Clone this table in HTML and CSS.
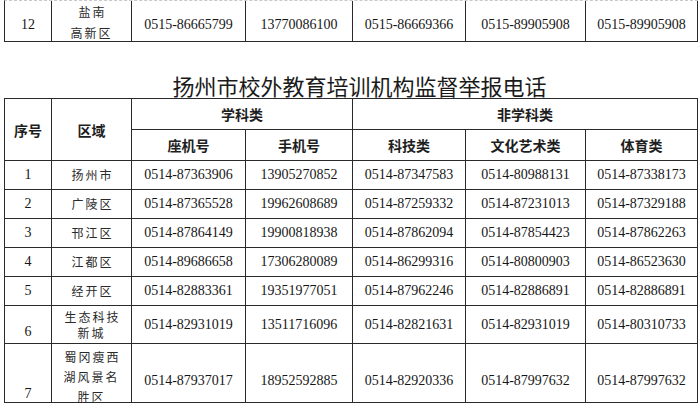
FILE: index.html
```html
<!DOCTYPE html>
<html lang="zh-CN">
<head>
<meta charset="utf-8">
<title>扬州市校外教育培训机构监督举报电话</title>
<link rel="stylesheet" href="styles.css">
</head>
<body>
<div class="page">
  <div class="sheet sheet-top">
    <div class="cell no top-num">12</div>
    <div class="cell area area-top">盐南<br>高新区</div>
    <div class="cell num top-num">0515-86665799</div>
    <div class="cell num top-num">13770086100</div>
    <div class="cell num top-num">0515-86669366</div>
    <div class="cell num top-num">0515-89905908</div>
    <div class="cell num top-num">0515-89905908</div>
  </div>

  <div class="title">扬州市校外教育培训机构监督举报电话</div>

  <div class="sheet sheet-main">
    <div class="cell hd span-r2">序号</div>
    <div class="cell hd span-r2">区域</div>
    <div class="cell hd span-c2">学科类</div>
    <div class="cell hd span-c3">非学科类</div>
    <div class="cell hd">座机号</div>
    <div class="cell hd">手机号</div>
    <div class="cell hd">科技类</div>
    <div class="cell hd">文化艺术类</div>
    <div class="cell hd">体育类</div>

    <div class="cell no">1</div><div class="cell area">扬州市</div>
    <div class="cell num">0514-87363906</div><div class="cell num">13905270852</div>
    <div class="cell num">0514-87347583</div><div class="cell num">0514-80988131</div><div class="cell num">0514-87338173</div>

    <div class="cell no">2</div><div class="cell area">广陵区</div>
    <div class="cell num">0514-87365528</div><div class="cell num">19962608689</div>
    <div class="cell num">0514-87259332</div><div class="cell num">0514-87231013</div><div class="cell num">0514-87329188</div>

    <div class="cell no">3</div><div class="cell area">邗江区</div>
    <div class="cell num">0514-87864149</div><div class="cell num">19900818938</div>
    <div class="cell num">0514-87862094</div><div class="cell num">0514-87854423</div><div class="cell num">0514-87862263</div>

    <div class="cell no">4</div><div class="cell area">江都区</div>
    <div class="cell num">0514-89686658</div><div class="cell num">17306280089</div>
    <div class="cell num">0514-86299316</div><div class="cell num">0514-80800903</div><div class="cell num">0514-86523630</div>

    <div class="cell no">5</div><div class="cell area">经开区</div>
    <div class="cell num">0514-82883361</div><div class="cell num">19351977051</div>
    <div class="cell num">0514-87962246</div><div class="cell num">0514-82886891</div><div class="cell num">0514-82886891</div>

    <div class="cell no no-6">6</div><div class="cell area area-6">生态科技<br>新城</div>
    <div class="cell num">0514-82931019</div><div class="cell num">13511716096</div>
    <div class="cell num">0514-82821631</div><div class="cell num">0514-82931019</div><div class="cell num">0514-80310733</div>

    <div class="cell no no-7">7</div><div class="cell area area-7">蜀冈瘦西<br>湖风景名<br>胜区</div>
    <div class="cell num num-7">0514-87937017</div><div class="cell num num-7">18952592885</div>
    <div class="cell num num-7">0514-82920336</div><div class="cell num num-7">0514-87997632</div><div class="cell num num-7">0514-87997632</div>
  </div>
</div>
</body>
</html>
```

FILE: styles.css
```css
html, body {
  margin: 0;
  padding: 0;
  background: #ffffff;
}

.page {
  width: 700px;
  height: 408px;
  overflow: hidden;
  padding-left: 4px;
  box-sizing: border-box;
  color: #161616;
}

.sheet {
  display: grid;
  grid-template-columns: 47px 80px 114px 107px 113px 120px 112px;
  width: max-content;
  border-left: 1px solid #2a2a2a;
}

.sheet-top {
  grid-template-rows: 41px;
  border-top: 1px dashed #c8c8c8;
}

.sheet-main {
  grid-template-rows: 31px 31px 29px 29px 29px 29px 29px 38px 59px;
  border-top: 1px solid #2a2a2a;
}

.cell {
  box-sizing: border-box;
  border-right: 1px solid #2a2a2a;
  border-bottom: 1px solid #2a2a2a;
  display: flex;
  align-items: center;
  justify-content: center;
  text-align: center;
  overflow: visible;
  white-space: nowrap;
}

.span-r2 { grid-row: span 2; }
.span-c2 { grid-column: span 2; }
.span-c3 { grid-column: span 3; }

.hd {
  font-family: "Noto Sans CJK SC", sans-serif;
  font-weight: 700;
  font-size: 14px;
  line-height: 16px;
  color: #1e1e1e;
}

.num,
.no {
  font-family: "Liberation Serif", "Times New Roman", serif;
  font-size: 14px;
  line-height: 16px;
}

.area {
  font-family: "Noto Sans CJK SC", sans-serif;
  font-weight: 400;
  font-size: 12px;
  letter-spacing: 2px;
  text-indent: 2px;
  line-height: 16px;
  color: #2a2a2a;
}

.top-num {
  padding-top: 7px;
}

.area-top {
  align-items: flex-start;
  line-height: 21px;
}

.title {
  font-family: "Noto Sans CJK SC", sans-serif;
  font-size: 22px;
  line-height: 22px;
  font-weight: 400;
  text-align: center;
  height: 56px;
  padding-top: 32px;
  padding-left: 16px;
  width: 695px;
  box-sizing: border-box;
  color: #1a1a1a;
}

.area-6 {
  align-items: flex-start;
  padding-top: 3px;
}

.no-6 {
  align-items: flex-end;
  padding-bottom: 3px;
}

.area-7 {
  align-items: flex-start;
  padding-top: 3px;
  line-height: 20px;
}

.no-7 {
  align-items: flex-end;
  padding-bottom: 0;
}

.num-7 {
  padding-top: 16px;
}
```
